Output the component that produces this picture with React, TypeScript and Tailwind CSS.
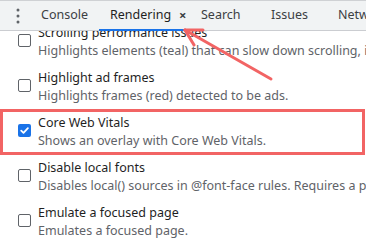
import React from "react";

const font = { fontFamily: '"Noto Sans", "Open Sans", sans-serif' };

function Checkbox({ checked }: { checked?: boolean }) {
  if (checked) {
    return (
      <div className="w-[13px] h-[13px] rounded-[2px] bg-[#1a73e8] flex items-center justify-center">
        <svg width="11" height="11" viewBox="0 0 11 11">
          <path d="M2.2 5.6 L4.5 7.8 L8.9 3.2" fill="none" stroke="white" strokeWidth="1.8" strokeLinecap="round" strokeLinejoin="round" />
        </svg>
      </div>
    );
  }
  return <div className="w-[13px] h-[13px] rounded-[2px] border-[1.5px] border-[#5f6368] bg-white" />;
}

function Item({ title, desc, checked, boxed }: { title: string; desc: string; checked?: boolean; boxed?: boolean }) {
  return (
    <div className="relative h-[45px] flex pt-[5px]">
      <div className="w-[38px] shrink-0 pl-[18px] pt-[10px]">
        <Checkbox checked={checked} />
      </div>
      <div className="flex flex-col whitespace-nowrap">
        <div className="text-[12.5px] leading-[18px] text-[#1f1f1f]">{title}</div>
        <div className="text-[12.5px] leading-[18px] text-[#5f6368]">{desc}</div>
      </div>
      {boxed && <div className="absolute left-0 right-[1px] top-[0px] bottom-[-1px] border-[3px] border-[#f26464]" />}
    </div>
  );
}

export default function App() {
  return (
    <div className="relative w-[366px] h-[248px] overflow-hidden bg-white" style={font}>
      <div className="relative z-10 h-[31px] bg-[#f1f3f4] border-t border-[#cfd1d4] border-b border-b-[#cbcdd1] flex items-stretch text-[12.5px] text-[#3c4043] whitespace-nowrap">
        <div className="w-[30px] shrink-0 flex items-center justify-center pl-[6px]">
          <svg width="4" height="16" viewBox="0 0 4 16">
            <circle cx="2" cy="2" r="1.5" fill="#5f6368" />
            <circle cx="2" cy="8" r="1.5" fill="#5f6368" />
            <circle cx="2" cy="14" r="1.5" fill="#5f6368" />
          </svg>
        </div>
        <div className="w-[69px] shrink-0 pl-[11px] flex items-center">Console</div>
        <div className="relative w-[91px] shrink-0 pl-[11px] flex items-center text-[#1f1f1f]">
          <span>Rendering</span>
          <span className="ml-[8px] text-[13px] font-bold text-[#3c4043]">×</span>
          <div className="absolute left-0 right-0 bottom-[-1px] h-[2px] bg-[#1a73e8]" />
        </div>
        <div className="w-[70px] shrink-0 pl-[11px] flex items-center">Search</div>
        <div className="w-[67px] shrink-0 pl-[11px] flex items-center">Issues</div>
        <div className="shrink-0 pl-[11px] flex items-center">Network</div>
      </div>
      <div className="mt-[-12px]">
        <Item title="Scrolling performance issues" desc="Highlights elements (teal) that can slow down scrolling, including touch & wheel event handlers" />
        <Item title="Highlight ad frames" desc="Highlights frames (red) detected to be ads." />
        <Item title="Core Web Vitals" desc="Shows an overlay with Core Web Vitals." checked boxed />
        <Item title="Disable local fonts" desc="Disables local() sources in @font-face rules. Requires a page reload to apply." />
        <Item title="Emulate a focused page" desc="Emulates a focused page." />
      </div>
      <svg className="absolute left-0 top-0 z-20 pointer-events-none" width="366" height="248">
        <g stroke="#f26464" strokeWidth="3" strokeLinecap="round" fill="none">
          <line x1="271" y1="79" x2="185" y2="30" />
          <line x1="185" y1="30" x2="203" y2="30" />
          <line x1="185" y1="30" x2="194" y2="45" />
        </g>
      </svg>
    </div>
  );
}
